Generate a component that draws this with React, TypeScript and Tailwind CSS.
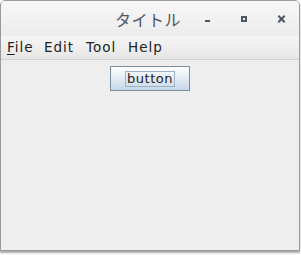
const App = () => {
  return (
    <div className="w-[301px] h-[255px] bg-white">
      <div
        className="w-[300px] h-[251px] flex flex-col border border-[#9a9a9a] rounded-t-[5px] bg-[#eeeeee] shadow-[0_2px_2px_rgba(0,0,0,0.35)] overflow-hidden"
        style={{ fontFamily: '"DejaVu Sans", sans-serif' }}
      >
        <div className="h-[35px] flex items-center bg-gradient-to-b from-[#f7f7f7] to-[#ececec] relative">
          <div
            className="absolute left-0 right-0 text-center text-[16px] text-[#4c5864] tracking-[0.5px]"
            style={{ fontFamily: '"Noto Sans CJK JP", sans-serif' }}
          >
            <span className="ml-[-4px]">タイトル</span>
          </div>
          <div className="ml-auto flex items-center relative">
            <div className="w-[5px] h-[2px] bg-[#4c5864] mt-[5px] mr-[31px]" />
            <div className="w-[6px] h-[6px] border-[2px] border-[#4c5864] mr-[31px]" />
            <div className="relative w-[7px] h-[7px] mr-[14px]">
              <div className="absolute left-[-1px] top-[2.5px] w-[9px] h-[2px] bg-[#4c5864] rotate-45" />
              <div className="absolute left-[-1px] top-[2.5px] w-[9px] h-[2px] bg-[#4c5864] -rotate-45" />
            </div>
          </div>
        </div>
        <div className="h-[24px] flex items-center px-[6px] text-[13.5px] text-[#222] bg-gradient-to-b from-[#f6f6f6] to-[#e6e6e6] border-b border-[#d0d0d0] tracking-[1px]">
          <span className="w-[37px]">
            <span className="underline underline-offset-[2px]">F</span>ile
          </span>
          <span className="w-[42px]">Edit</span>
          <span className="w-[42px]">Tool</span>
          <span>Help</span>
        </div>
        <div className="flex-1 flex justify-center pt-[6px]">
          <div className="w-[80px] h-[25px] flex items-center justify-center border border-[#7f8e9c] bg-gradient-to-b from-[#ffffff] to-[#c6d7e8]">
            <div className="px-[1px] border border-[#9fb1c4] leading-[14px] text-[13px] text-[#222] tracking-[0.5px]">
              button
            </div>
          </div>
        </div>
      </div>
    </div>
  );
};

export default App;
